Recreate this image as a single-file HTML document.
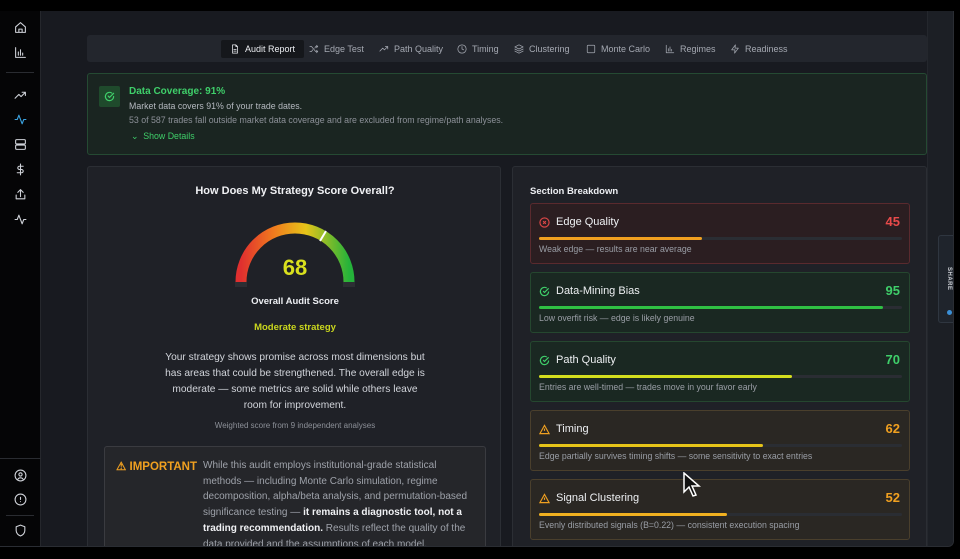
<!DOCTYPE html>
<html><head><meta charset="utf-8"><style>
*{box-sizing:border-box;margin:0;padding:0}
body{width:960px;height:559px;background:#000;font-family:"Liberation Sans",sans-serif;position:relative;overflow:hidden;color:#e5e7eb}
.app{position:absolute;left:0;top:11px;width:954px;height:536px;background:#181a20;border-radius:0 0 6px 0;overflow:hidden;border-right:1px solid #2a2d33;border-bottom:1px solid #2a2d33}
.side{position:absolute;left:0;top:0;width:41px;height:536px;background:#050506;border-right:1px solid #25272c}
.side svg{position:absolute;left:14px;width:13px;height:13px;fill:none;stroke:#cfd2d8;stroke-width:2;stroke-linecap:round;stroke-linejoin:round}
.sep{position:absolute;left:6px;width:28px;height:1px;background:#2a2c31}
.rail{position:absolute;left:927px;top:0;width:27px;height:536px;background:#1c1f25;border-left:1px solid #24272d}
.nav{position:absolute;left:87px;top:24px;width:840px;height:27px;background:#23262d;border-radius:3px}
.tab{position:absolute;top:5px;height:18px;font-size:9px;color:#a5a9b2;line-height:18px;display:flex;align-items:center;gap:5px}
.tab svg{width:10px;height:10px;fill:none;stroke:#a5a9b2;stroke-width:1.8;stroke-linecap:round;stroke-linejoin:round}
.tab.act{background:#15171b;color:#eceef2;padding:0 9px;border-radius:2px}
.tab.act svg{stroke:#eceef2}
.cov{position:absolute;left:87px;top:62px;width:840px;height:82px;background:#1a2521;border:1px solid #254a33;border-radius:3px}
.card{position:absolute;background:#1f2127;border:1px solid #2b2e34;border-radius:3px}
.bk{position:absolute;left:530px;width:380px;height:61px;border-radius:3px}
.bk .t{position:absolute;left:25px;top:12px;font-size:11px;color:#eef0f3}
.bk .n{position:absolute;right:9px;top:10px;font-size:13px;font-weight:bold}
.bk .ic{position:absolute;left:8px;top:13px;width:11px;height:11px}
.bk .tr{position:absolute;left:8px;top:33px;width:363px;height:3px;background:#2a2d33;border-radius:2px}
.bk .f{position:absolute;left:0;top:0;height:3px;border-radius:2px}
.bk .d{position:absolute;left:8px;top:40px;font-size:8.75px;color:#9a9ea6}
</style></head><body>
<div class="app">
<div class="side">
<svg style="top:10px" viewBox="0 0 24 24"><path d="M3 11 12 3l9 8v10H3z M9 21v-6h6v6"/></svg>
<svg style="top:35px" viewBox="0 0 24 24"><path d="M3 3v18h18 M8 17v-6 M12 17V7 M16 17v-4"/></svg>
<div class="sep" style="top:61px"></div>
<svg style="top:78px" viewBox="0 0 24 24"><path d="M2 17 9 10l4 4 8-8 M15 6h6v6"/></svg>
<svg style="top:102px;stroke:#3ba3e0" viewBox="0 0 24 24"><path d="M2 12h4l3-8 6 16 3-8h4"/></svg>
<svg style="top:127px" viewBox="0 0 24 24"><rect x="3" y="3" width="18" height="8" rx="2"/><rect x="3" y="13" width="18" height="8" rx="2"/></svg>
<svg style="top:152px" viewBox="0 0 24 24"><path d="M12 2v20 M17 6H10a3 3 0 0 0 0 6h4a3 3 0 0 1 0 6H6"/></svg>
<svg style="top:177px" viewBox="0 0 24 24"><path d="M4 13v7h16v-7 M12 3v13 M7 8l5-5 5 5"/></svg>
<svg style="top:202px" viewBox="0 0 24 24"><path d="M2 12h4l3-8 6 16 3-8h4"/></svg>
<div class="sep" style="top:447px;left:0;width:41px"></div>
<svg style="top:458px" viewBox="0 0 24 24"><circle cx="12" cy="12" r="10"/><circle cx="12" cy="10" r="3"/><path d="M7 19a6 6 0 0 1 10 0"/></svg>
<svg style="top:482px" viewBox="0 0 24 24"><circle cx="12" cy="12" r="10"/><path d="M12 8v4 M12 16h0"/></svg>
<div class="sep" style="top:504px"></div>
<svg style="top:513px" viewBox="0 0 24 24"><path d="M12 2 4 5v7c0 5 4 9 8 10 4-1 8-5 8-10V5z"/></svg>
</div>
<div class="rail">
<div style="position:absolute;left:10px;top:224px;width:17px;height:88px;background:#1f242c;border:1px solid #2f3640;border-right:none;border-radius:3px 0 0 3px"></div>
<div style="position:absolute;font-size:6px;font-weight:bold;color:#c9ccd2;transform:rotate(90deg);transform-origin:left top;left:24px;top:256px;letter-spacing:.5px">SHARE</div>
<div style="position:absolute;left:19px;top:299px;width:5px;height:5px;border-radius:50%;background:#3b8fd6"></div>
</div>
<div class="nav">
<div class="tab act" style="left:134px"><svg viewBox="0 0 24 24"><path d="M14 2H6v20h12V6z M14 2v4h4 M9 13h6 M9 17h6"/></svg>Audit Report</div>
<div class="tab" style="left:222px"><svg viewBox="0 0 24 24"><path d="M2 6h4l10 12h5 M2 18h4l3-4 M14 10l2-4h5 M18 3l3 3-3 3 M18 15l3 3-3 3"/></svg>Edge Test</div>
<div class="tab" style="left:292px"><svg viewBox="0 0 24 24"><path d="M2 17 9 10l4 4 8-8 M15 6h6v6"/></svg>Path Quality</div>
<div class="tab" style="left:370px"><svg viewBox="0 0 24 24"><circle cx="12" cy="12" r="10"/><path d="M12 6v6l4 2"/></svg>Timing</div>
<div class="tab" style="left:427px"><svg viewBox="0 0 24 24"><path d="M12 2 2 7l10 5 10-5z M2 12l10 5 10-5 M2 17l10 5 10-5"/></svg>Clustering</div>
<div class="tab" style="left:499px"><svg viewBox="0 0 24 24"><rect x="3" y="3" width="18" height="18" rx="2"/></svg>Monte Carlo</div>
<div class="tab" style="left:578px"><svg viewBox="0 0 24 24"><path d="M3 3v18h18 M8 17v-6 M12 17V7 M16 17v-4"/></svg>Regimes</div>
<div class="tab" style="left:643px"><svg viewBox="0 0 24 24"><path d="M13 2 4 14h8l-1 8 9-12h-8z"/></svg>Readiness</div>
</div>
<div class="cov">
<div style="position:absolute;left:11px;top:12px;width:21px;height:21px;background:#1f4a2c;border-radius:2px"></div>
<svg style="position:absolute;left:16px;top:17px;width:11px;height:11px" viewBox="0 0 24 24" fill="none" stroke="#3fcf6a" stroke-width="2.5" stroke-linecap="round"><path d="M21 12a9 9 0 1 1-4-7.5 M9 11l3 3 9-9"/></svg>
<div style="position:absolute;left:41px;top:12px;font-size:10px;font-weight:bold;color:#3fcf6a">Data Coverage: 91%</div>
<div style="position:absolute;left:41px;top:27px;font-size:8.8px;color:#b5b9c0">Market data covers 91% of your trade dates.</div>
<div style="position:absolute;left:41px;top:41px;font-size:8.8px;color:#8c9098">53 of 587 trades fall outside market data coverage and are excluded from regime/path analyses.</div>
<div style="position:absolute;left:43px;top:57px;font-size:8.8px;color:#3fcf6a">⌄&nbsp; Show Details</div>
</div>
<div class="card" style="left:87px;top:155px;width:414px;height:400px">
<div style="position:absolute;left:0;width:414px;top:18px;text-align:center;font-size:11px;font-weight:bold;color:#f0f1f4">How Does My Strategy Score Overall?</div>
<svg style="position:absolute;left:140px;top:50px" width="134" height="76" viewBox="0 0 134 76">
<defs><linearGradient id="g" x1="0" x2="1" y1="0" y2="0"><stop offset="0" stop-color="#e02f2f"/><stop offset=".3" stop-color="#f07a1e"/><stop offset=".6" stop-color="#e6c419"/><stop offset="1" stop-color="#25b33a"/></linearGradient></defs>
<path d="M13 65 A54 54 0 0 1 121 65" fill="none" stroke="url(#g)" stroke-width="11"/>
<rect x="7" y="65" width="12" height="5" fill="#2c2e33"/><rect x="115" y="65" width="12" height="5" fill="#2c2e33"/>
<line x1="92" y1="24" x2="98" y2="14" stroke="#fff" stroke-width="2"/>
<text x="67" y="58" text-anchor="middle" font-family="Liberation Sans" font-weight="bold" font-size="22" fill="#d9e01e">68</text>
</svg>
<div style="position:absolute;left:0;width:414px;top:129px;text-align:center;font-size:9.5px;font-weight:bold;color:#eceef2">Overall Audit Score</div>
<div style="position:absolute;left:0;width:414px;top:155px;text-align:center;font-size:9.5px;font-weight:bold;color:#c9d61e">Moderate strategy</div>
<div style="position:absolute;left:72px;width:270px;top:183px;text-align:center;font-size:10.2px;line-height:16px;color:#d2d5db">Your strategy shows promise across most dimensions but has areas that could be strengthened. The overall edge is moderate — some metrics are solid while others leave room for improvement.</div>
<div style="position:absolute;left:0;width:414px;top:254px;text-align:center;font-size:8px;color:#8c9098">Weighted score from 9 independent analyses</div>
<div style="position:absolute;left:16px;top:279px;width:382px;height:120px;background:#25262a;border:1px solid #3a3b40;border-radius:3px">
<div style="position:absolute;left:11px;top:12px;font-size:11.5px;font-weight:bold;color:#f0a020">⚠ IMPORTANT</div>
<div style="position:absolute;left:98px;top:11px;width:272px;font-size:10px;line-height:15.7px;color:#9ea2aa">While this audit employs institutional-grade statistical methods — including Monte Carlo simulation, regime decomposition, alpha/beta analysis, and permutation-based significance testing — <b style="color:#f0f1f4">it remains a diagnostic tool, not a trading recommendation.</b> Results reflect the quality of the data provided and the assumptions of each model.</div>
</div>
</div>
<div class="card" style="left:512px;top:155px;width:415px;height:400px">
<div style="position:absolute;left:17px;top:19px;font-size:9.5px;font-weight:bold;color:#eceef2">Section Breakdown</div>
</div>
</div>
<div class="bk" style="top:203px;background:#2b1e21;border:1px solid #5a2a2e"><svg class="ic" viewBox="0 0 24 24" fill="none" stroke="#e04848" stroke-width="2.5"><circle cx="12" cy="12" r="10"/><path d="M9 9l6 6M15 9l-6 6"/></svg><div class="t">Edge Quality</div><div class="n" style="color:#e84a4a">45</div><div class="tr"><div class="f" style="width:163px;background:#f0a020"></div></div><div class="d">Weak edge — results are near average</div></div>
<div class="bk" style="top:272px;background:#1a2822;border:1px solid #25472f"><svg class="ic" viewBox="0 0 24 24" fill="none" stroke="#3fcf6a" stroke-width="2.5"><path d="M21 12a9 9 0 1 1-4-7.5 M9 11l3 3 9-9"/></svg><div class="t">Data-Mining Bias</div><div class="n" style="color:#3fcf6a">95</div><div class="tr"><div class="f" style="width:344px;background:#2fc043"></div></div><div class="d">Low overfit risk — edge is likely genuine</div></div>
<div class="bk" style="top:341px;background:#1a2822;border:1px solid #25472f"><svg class="ic" viewBox="0 0 24 24" fill="none" stroke="#3fcf6a" stroke-width="2.5"><path d="M21 12a9 9 0 1 1-4-7.5 M9 11l3 3 9-9"/></svg><div class="t">Path Quality</div><div class="n" style="color:#3fcf6a">70</div><div class="tr"><div class="f" style="width:253px;background:#d4de1e"></div></div><div class="d">Entries are well-timed — trades move in your favor early</div></div>
<div class="bk" style="top:410px;background:#2a2723;border:1px solid #4a3f2c"><svg class="ic" viewBox="0 0 24 24" fill="none" stroke="#f0a020" stroke-width="2.5"><path d="M12 3 2 21h20z M12 10v5 M12 18h0"/></svg><div class="t">Timing</div><div class="n" style="color:#f0a020">62</div><div class="tr"><div class="f" style="width:224px;background:#e6c419"></div></div><div class="d">Edge partially survives timing shifts — some sensitivity to exact entries</div></div>
<div class="bk" style="top:479px;background:#2a2723;border:1px solid #4a3f2c"><svg class="ic" viewBox="0 0 24 24" fill="none" stroke="#f0a020" stroke-width="2.5"><path d="M12 3 2 21h20z M12 10v5 M12 18h0"/></svg><div class="t">Signal Clustering</div><div class="n" style="color:#f0a020">52</div><div class="tr"><div class="f" style="width:188px;background:#f0b020"></div></div><div class="d">Evenly distributed signals (B=0.22) — consistent execution spacing</div></div>
<svg style="position:absolute;left:683px;top:472px" width="18" height="26" viewBox="0 0 18 26"><path d="M1 1v19l5-5 4 9 3-1-4-9h7z" fill="#111" stroke="#fff" stroke-width="1.5"/></svg>
</body></html>
